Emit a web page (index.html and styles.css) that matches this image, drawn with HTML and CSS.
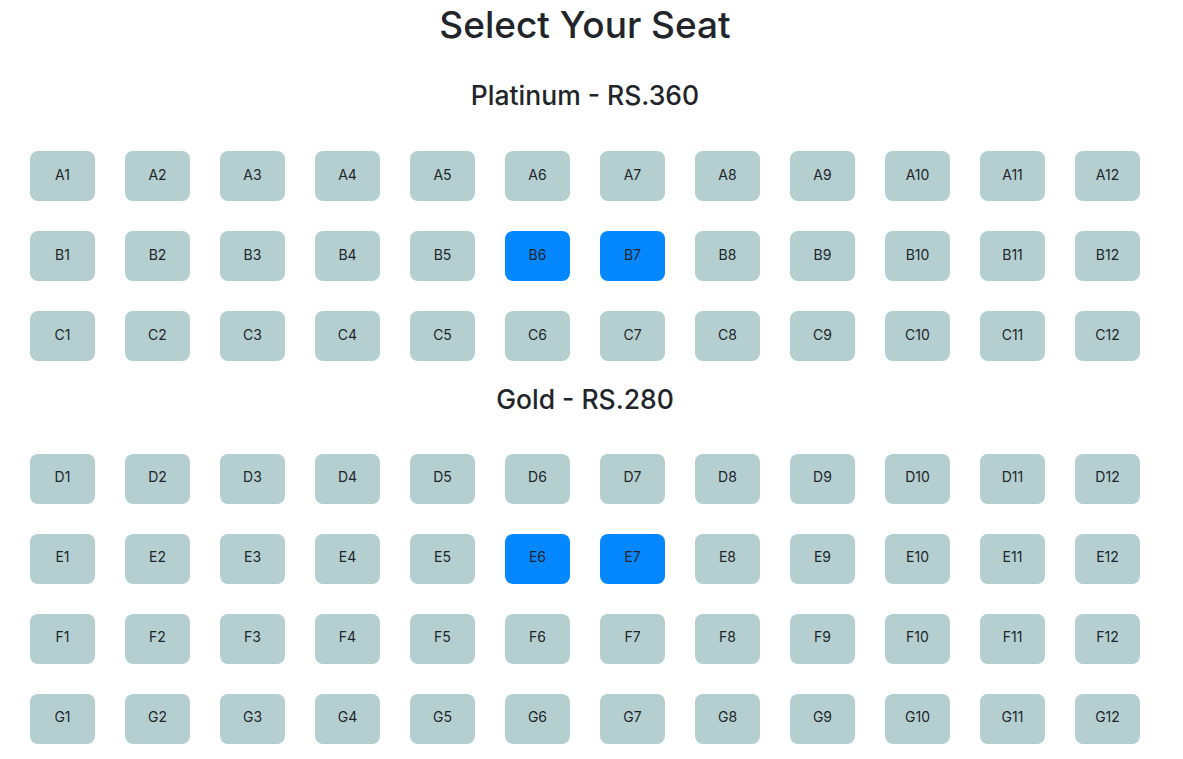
FILE: index.html
```html
<!DOCTYPE html>
<html lang="en">
<head>
    <meta charset="UTF-8">
    <meta name="viewport" content="width=device-width, initial-scale=1.0">
    <title>Select Your Seat</title>
    <link rel="stylesheet" href="styles.css">
</head>
<body>
    <main class="theatre">
        <h1 class="title">Select Your Seat</h1>

        <section class="tier tier-platinum">
            <h2 class="tier-name">Platinum - RS.360</h2>
            <div class="seat-grid">
                <div class="seat">A1</div><div class="seat">A2</div><div class="seat">A3</div><div class="seat">A4</div>
                <div class="seat">A5</div><div class="seat">A6</div><div class="seat">A7</div><div class="seat">A8</div>
                <div class="seat">A9</div><div class="seat">A10</div><div class="seat">A11</div><div class="seat">A12</div>

                <div class="seat">B1</div><div class="seat">B2</div><div class="seat">B3</div><div class="seat">B4</div>
                <div class="seat">B5</div><div class="seat selected">B6</div><div class="seat selected">B7</div><div class="seat">B8</div>
                <div class="seat">B9</div><div class="seat">B10</div><div class="seat">B11</div><div class="seat">B12</div>

                <div class="seat">C1</div><div class="seat">C2</div><div class="seat">C3</div><div class="seat">C4</div>
                <div class="seat">C5</div><div class="seat">C6</div><div class="seat">C7</div><div class="seat">C8</div>
                <div class="seat">C9</div><div class="seat">C10</div><div class="seat">C11</div><div class="seat">C12</div>
            </div>
        </section>

        <section class="tier tier-gold">
            <h2 class="tier-name">Gold - RS.280</h2>
            <div class="seat-grid">
                <div class="seat">D1</div><div class="seat">D2</div><div class="seat">D3</div><div class="seat">D4</div>
                <div class="seat">D5</div><div class="seat">D6</div><div class="seat">D7</div><div class="seat">D8</div>
                <div class="seat">D9</div><div class="seat">D10</div><div class="seat">D11</div><div class="seat">D12</div>

                <div class="seat">E1</div><div class="seat">E2</div><div class="seat">E3</div><div class="seat">E4</div>
                <div class="seat">E5</div><div class="seat selected">E6</div><div class="seat selected">E7</div><div class="seat">E8</div>
                <div class="seat">E9</div><div class="seat">E10</div><div class="seat">E11</div><div class="seat">E12</div>

                <div class="seat">F1</div><div class="seat">F2</div><div class="seat">F3</div><div class="seat">F4</div>
                <div class="seat">F5</div><div class="seat">F6</div><div class="seat">F7</div><div class="seat">F8</div>
                <div class="seat">F9</div><div class="seat">F10</div><div class="seat">F11</div><div class="seat">F12</div>

                <div class="seat">G1</div><div class="seat">G2</div><div class="seat">G3</div><div class="seat">G4</div>
                <div class="seat">G5</div><div class="seat">G6</div><div class="seat">G7</div><div class="seat">G8</div>
                <div class="seat">G9</div><div class="seat">G10</div><div class="seat">G11</div><div class="seat">G12</div>
            </div>
        </section>
    </main>
</body>
</html>
```

FILE: styles.css
```css
* {
    box-sizing: border-box;
}

body {
    margin: 0;
    color: #212529;
    background-color: #fff;
    font-family: Inter, "Noto Sans", sans-serif;
}

.theatre {
    width: 1170px;
    padding: 3px 30px 30px;
}

.title {
    margin: 0;
    font-size: 37px;
    font-weight: 500;
    line-height: 1.2;
    text-align: center;
}

.tier-name {
    margin: 0;
    font-size: 26.5px;
    font-weight: 500;
    line-height: 1.2;
    text-align: center;
}

.tier-platinum .tier-name {
    margin-top: 33px;
    margin-bottom: 39px;
}

.tier-gold .tier-name {
    margin-top: 23px;
    margin-bottom: 38px;
}

/* 12 seats per row, 65x50 with 30px gaps */
.seat-grid {
    display: grid;
    grid-template-columns: repeat(12, 65px);
    gap: 30px;
}

.seat {
    display: flex;
    align-items: center;
    justify-content: center;
    height: 50px;
    padding-bottom: 4px;
    border-radius: 8px;
    background-color: #b5cfd1;
    font-size: 14px;
}

.seat.selected {
    background-color: #0588ff;
}
```
